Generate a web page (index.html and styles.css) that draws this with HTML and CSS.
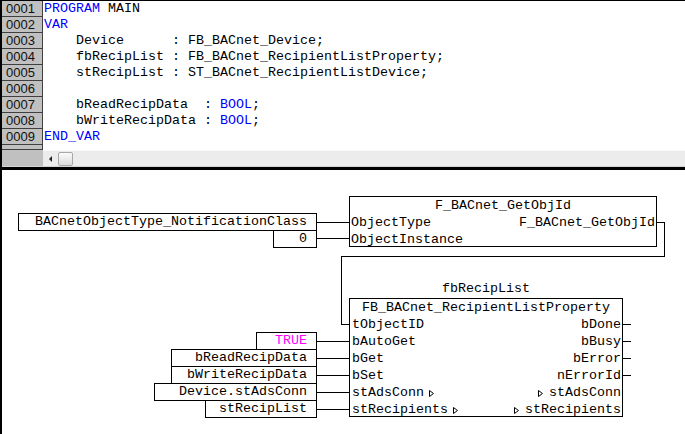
FILE: index.html
```html
<!DOCTYPE html>
<html>
<head>
<meta charset="utf-8">
<link rel="stylesheet" href="styles.css">
</head>
<body>
<div class="page">
  <div class="editor">
    <div class="code">
      <div class="gutter">
        <div class="num">0001</div>
        <div class="num">0002</div>
        <div class="num">0003</div>
        <div class="num">0004</div>
        <div class="num">0005</div>
        <div class="num">0006</div>
        <div class="num">0007</div>
        <div class="num">0008</div>
        <div class="num">0009</div>
        <div class="num part"></div>
      </div>
      <div class="src">
        <div class="ln"><span class="kw">PROGRAM</span> MAIN</div>
        <div class="ln"><span class="kw">VAR</span></div>
        <div class="ln">    Device      : FB_BACnet_Device;</div>
        <div class="ln">    fbRecipList : FB_BACnet_RecipientListProperty;</div>
        <div class="ln">    stRecipList : ST_BACnet_RecipientListDevice;</div>
        <div class="ln"> </div>
        <div class="ln">    bReadRecipData  : <span class="kw">BOOL</span>;</div>
        <div class="ln">    bWriteRecipData : <span class="kw">BOOL</span>;</div>
        <div class="ln"><span class="kw">END_VAR</span></div>
      </div>
    </div>
    <div class="hscroll">
      <div class="corner"></div>
      <div class="track"><span class="arrow"></span><span class="thumb"></span></div>
    </div>
  </div>
  <div class="splitter"></div>
  <div class="fbd">
    <svg class="wires" width="683" height="264" viewBox="0 0 683 264">
      <g stroke="#000" stroke-width="1" fill="none" shape-rendering="crispEdges">
        <path d="M313 52.5H347"/>
        <path d="M313 68.5H347"/>
        <path d="M653 52.5H662.5V86.5H339.5V154.5H347"/>
        <path d="M313 171.5H347"/>
        <path d="M313 188.5H347"/>
        <path d="M313 205.5H347"/>
        <path d="M313 222.5H347"/>
        <path d="M313 239.5H347"/>
        <path d="M619 154.5H629"/>
        <path d="M619 171.5H629"/>
        <path d="M619 188.5H629"/>
        <path d="M619 205.5H629"/>
      </g>
    </svg>

    <div class="var a-type">BACnetObjectType_NotificationClass</div>
    <div class="var a-inst">0</div>

    <div class="fb fb-get">
      <div class="title">F_BACnet_GetObjId</div>
      <div class="row"><span>ObjectType</span><span>F_BACnet_GetObjId</span></div>
      <div class="row"><span>ObjectInstance</span></div>
    </div>

    <div class="inst">fbRecipList</div>
    <div class="fb fb-list">
      <div class="title">FB_BACnet_RecipientListProperty</div>
      <div class="row"><span>tObjectID</span><span>bDone</span></div>
      <div class="row"><span>bAutoGet</span><span>bBusy</span></div>
      <div class="row"><span>bGet</span><span>bError</span></div>
      <div class="row"><span>bSet</span><span>nErrorId</span></div>
      <div class="row"><span>stAdsConn<svg class="tri in" width="5" height="7" viewBox="0 0 5 7"><path d="M0.5 0.5L4.5 3.5L0.5 6.5Z" fill="none" stroke="#000"/></svg></span><span><svg class="tri out" width="5" height="7" viewBox="0 0 5 7"><path d="M0.5 0.5L4.5 3.5L0.5 6.5Z" fill="none" stroke="#000"/></svg>stAdsConn</span></div>
      <div class="row"><span>stRecipients<svg class="tri in" width="5" height="7" viewBox="0 0 5 7"><path d="M0.5 0.5L4.5 3.5L0.5 6.5Z" fill="none" stroke="#000"/></svg></span><span><svg class="tri out" width="5" height="7" viewBox="0 0 5 7"><path d="M0.5 0.5L4.5 3.5L0.5 6.5Z" fill="none" stroke="#000"/></svg>stRecipients</span></div>
    </div>

    <div class="var v-true lit">TRUE</div>
    <div class="var v-read">bReadRecipData</div>
    <div class="var v-write">bWriteRecipData</div>
    <div class="var v-conn">Device.stAdsConn</div>
    <div class="var v-list">stRecipList</div>
  </div>
</div>
</body>
</html>
```

FILE: styles.css
```css
html, body {
  margin: 0;
  padding: 0;
  background: #fff;
}

.page {
  width: 685px;
  height: 434px;
  box-sizing: border-box;
  border-left: 2px solid #000;
  overflow: hidden;
  font-family: "Liberation Mono", "Courier New", monospace;
  font-size: 13.33px;
  color: #000;
}

.editor {
  border-top: 1px solid #000;
  display: flex;
  flex-direction: column;
}

.code {
  display: flex;
  height: 149px;
  overflow: hidden;
}

.gutter {
  width: 40px;
  background: #c0c0c0;
  border-right: 1px solid #404040;
  flex: none;
}

.num {
  height: 15px;
  border-bottom: 1px solid #404040;
  font-family: "Liberation Sans", Arial, sans-serif;
  font-size: 13px;
  line-height: 16px;
  padding-left: 4px;
  color: #111;
}

.num.part {
  height: 4px;
}

.src {
  flex: 1;
  background: #fff;
  padding-left: 1px;
  line-height: 16px;
}

.ln {
  height: 16px;
  white-space: pre;
}

.kw {
  color: #0000ff;
}

.hscroll {
  display: flex;
  height: 16px;
}

.corner {
  width: 41px;
  background: #c0c0c0;
  flex: none;
}

.track {
  flex: 1;
  background: #ececec;
  border-top: 1px solid #f8f8f8;
  display: flex;
  align-items: center;
  padding-left: 6px;
  gap: 6px;
}

.arrow {
  width: 0;
  height: 0;
  border-top: 3px solid transparent;
  border-bottom: 3px solid transparent;
  border-right: 3px solid #222;
}

.thumb {
  width: 13px;
  height: 12px;
  border: 1px solid #a8a8a8;
  border-radius: 2px;
  background: linear-gradient(#fafafa, #dcdcdc);
}

.splitter {
  height: 4px;
  box-sizing: border-box;
  border-top: 1px solid #d4d4d4;
  background: #000;
}

.fbd {
  position: relative;
  height: 264px;
}

.wires {
  position: absolute;
  left: 0;
  top: 0;
}

.var {
  position: absolute;
  box-sizing: border-box;
  height: 18px;
  border: 1px solid #000;
  background: #fff;
  line-height: 16px;
  text-align: right;
  padding-right: 9px;
  white-space: pre;
}

.lit {
  color: #ff00ff;
}

.a-type { left: 16px; top: 43px; width: 299px; }
.a-inst { left: 271px; top: 60px; width: 44px; }

.v-true  { left: 254px; top: 162px; width: 61px; }
.v-read  { left: 169px; top: 179px; width: 146px; }
.v-write { left: 169px; top: 196px; width: 146px; }
.v-conn  { left: 152px; top: 213px; width: 163px; }
.v-list  { left: 203px; top: 230px; width: 112px; }

.fb {
  position: absolute;
  box-sizing: border-box;
  border: 1px solid #000;
  background: #fff;
  line-height: 17px;
  overflow: hidden;
}

.fb-get  { left: 347px; top: 26px; width: 308px; height: 51px; }
.fb-list { left: 347px; top: 128px; width: 274px; height: 119px; }

.title {
  height: 17px;
  text-align: center;
  white-space: pre;
}

.row {
  height: 17px;
  display: flex;
  justify-content: space-between;
  white-space: pre;
  padding: 0 1px 0 1px;
}

.fb-list .row {
  padding-left: 2px;
}

.inst {
  position: absolute;
  left: 347px;
  top: 111px;
  width: 274px;
  line-height: 16px;
  text-align: center;
}

.tri {
  display: inline-block;
  vertical-align: -1px;
}

.tri.in {
  margin-left: 5px;
}

.tri.out {
  margin-right: 6px;
}
```
